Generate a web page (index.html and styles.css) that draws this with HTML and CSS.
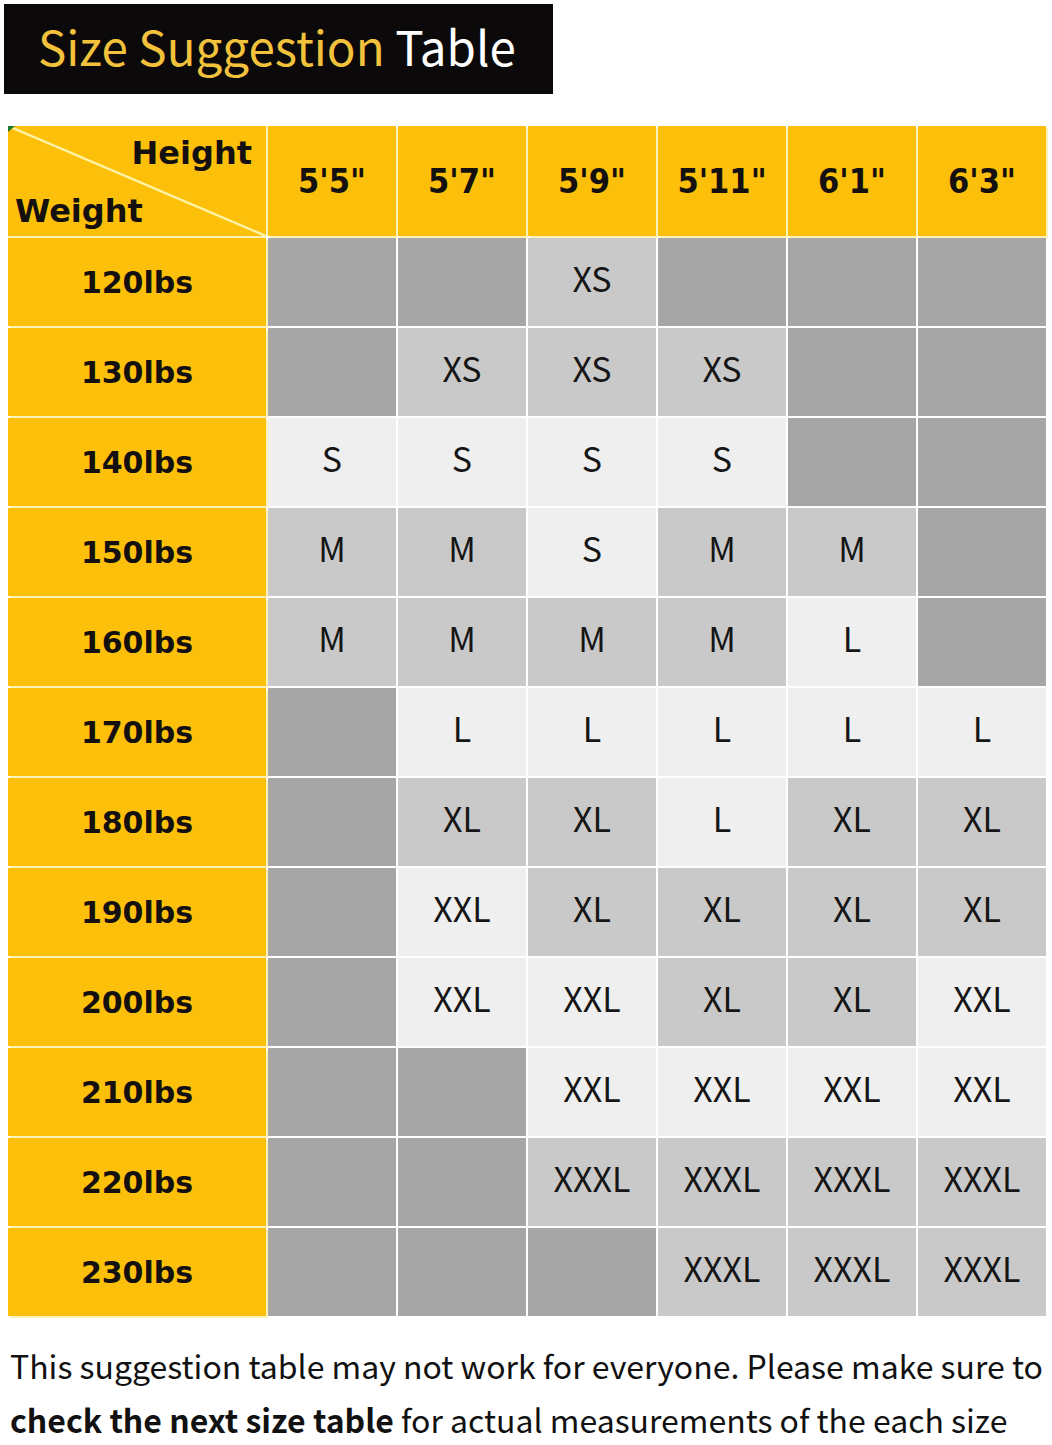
FILE: index.html
```html
<!DOCTYPE html>
<html lang="en">
<head>
<meta charset="utf-8">
<title>Size Suggestion Table</title>
<link rel="stylesheet" href="styles.css">
</head>
<body>
<div class="page">
  <div class="title"><span class="gold">Size Suggestion</span> <span class="white">Table</span></div>

  <div class="chart">
    <div class="corner">
      <svg class="diag" viewBox="0 0 258 110" preserveAspectRatio="none" aria-hidden="true">
        <line x1="0" y1="0" x2="258" y2="110" stroke="#fff3a6" stroke-width="2.4"/>
        <polygon points="0,0 7,0 0,6" fill="#1f7a2a"/>
      </svg>
      <span class="c-height">Height</span>
      <span class="c-weight">Weight</span>
    </div>
    <div class="hd">5'5"</div>
    <div class="hd">5'7"</div>
    <div class="hd">5'9"</div>
    <div class="hd">5'11"</div>
    <div class="hd">6'1"</div>
    <div class="hd">6'3"</div>

    <div class="wt">120lbs</div>
    <div class="c d"></div><div class="c d"></div><div class="c m">XS</div><div class="c d"></div><div class="c d"></div><div class="c d"></div>

    <div class="wt">130lbs</div>
    <div class="c d"></div><div class="c m">XS</div><div class="c m">XS</div><div class="c m">XS</div><div class="c d"></div><div class="c d"></div>

    <div class="wt">140lbs</div>
    <div class="c l">S</div><div class="c l">S</div><div class="c l">S</div><div class="c l">S</div><div class="c d"></div><div class="c d"></div>

    <div class="wt">150lbs</div>
    <div class="c m">M</div><div class="c m">M</div><div class="c l">S</div><div class="c m">M</div><div class="c m">M</div><div class="c d"></div>

    <div class="wt">160lbs</div>
    <div class="c m">M</div><div class="c m">M</div><div class="c m">M</div><div class="c m">M</div><div class="c l">L</div><div class="c d"></div>

    <div class="wt">170lbs</div>
    <div class="c d"></div><div class="c l">L</div><div class="c l">L</div><div class="c l">L</div><div class="c l">L</div><div class="c l">L</div>

    <div class="wt">180lbs</div>
    <div class="c d"></div><div class="c m">XL</div><div class="c m">XL</div><div class="c l">L</div><div class="c m">XL</div><div class="c m">XL</div>

    <div class="wt">190lbs</div>
    <div class="c d"></div><div class="c l">XXL</div><div class="c m">XL</div><div class="c m">XL</div><div class="c m">XL</div><div class="c m">XL</div>

    <div class="wt">200lbs</div>
    <div class="c d"></div><div class="c l">XXL</div><div class="c l">XXL</div><div class="c m">XL</div><div class="c m">XL</div><div class="c l">XXL</div>

    <div class="wt">210lbs</div>
    <div class="c d"></div><div class="c d"></div><div class="c l">XXL</div><div class="c l">XXL</div><div class="c l">XXL</div><div class="c l">XXL</div>

    <div class="wt">220lbs</div>
    <div class="c d"></div><div class="c d"></div><div class="c m">XXXL</div><div class="c m">XXXL</div><div class="c m">XXXL</div><div class="c m">XXXL</div>

    <div class="wt">230lbs</div>
    <div class="c d"></div><div class="c d"></div><div class="c d"></div><div class="c m">XXXL</div><div class="c m">XXXL</div><div class="c m">XXXL</div>
  </div>

  <p class="note">This suggestion table may not work for everyone. Please make sure to<br><b>check the next size table</b> for actual measurements of the each size</p>
</div>
</body>
</html>
```

FILE: styles.css
```css
html, body {
  margin: 0;
  padding: 0;
  background: #ffffff;
}

.page {
  width: 1052px;
  height: 1445px;
  overflow: hidden;
}

.title {
  margin: 4px 0 0 4px;
  width: 549px;
  height: 90px;
  background: #0b0909;
  box-sizing: border-box;
  padding-left: 34px;
  font-family: "Noto Sans CJK SC", "Noto Sans", sans-serif;
  font-size: 47.5px;
  line-height: 84px;
  white-space: nowrap;
}

.gold { color: #f3c23c; }
.white { color: #ffffff; }

.chart {
  margin: 32px 0 0 8px;
  display: grid;
  grid-template-columns: 258px repeat(6, 128px);
  grid-template-rows: 110px repeat(12, 88px);
  gap: 2px;
  width: 1038px;
}

.corner,
.hd,
.wt {
  background: #fdc00a;
  color: #141010;
  font-family: "DejaVu Sans", sans-serif;
  font-weight: bold;
  font-size: 30px;
  box-shadow: 2px 2px 0 #fff2b8;
}

.hd {
  font-family: "DejaVu Sans Condensed", "DejaVu Sans", sans-serif;
  font-size: 34px;
}

.corner {
  position: relative;
  box-shadow: 0 2px 0 #fff2b8, 2px 0 0 #fff2b8;
}

.diag {
  position: absolute;
  left: 0;
  top: 0;
  width: 100%;
  height: 100%;
}

.c-height {
  position: absolute;
  right: 14px;
  top: 8px;
  font-size: 32px;
}

.c-weight {
  position: absolute;
  left: 7px;
  top: 66px;
  font-size: 32px;
}

.hd,
.wt,
.c {
  display: flex;
  align-items: center;
  justify-content: center;
}

.c {
  font-family: "Noto Sans CJK SC", "Noto Sans", sans-serif;
  font-size: 34px;
  color: #151515;
  padding-bottom: 10px;
}

.d { background: #a6a6a6; }
.m { background: #c9c9c9; }
.l { background: #efefef; }

.note {
  margin: 22px 0 0 10px;
  font-family: "Noto Sans CJK SC", "Noto Sans", sans-serif;
  font-size: 32px;
  letter-spacing: 0;
  line-height: 54px;
  color: #111111;
  white-space: nowrap;
}

.note b { font-weight: bold; }
```
